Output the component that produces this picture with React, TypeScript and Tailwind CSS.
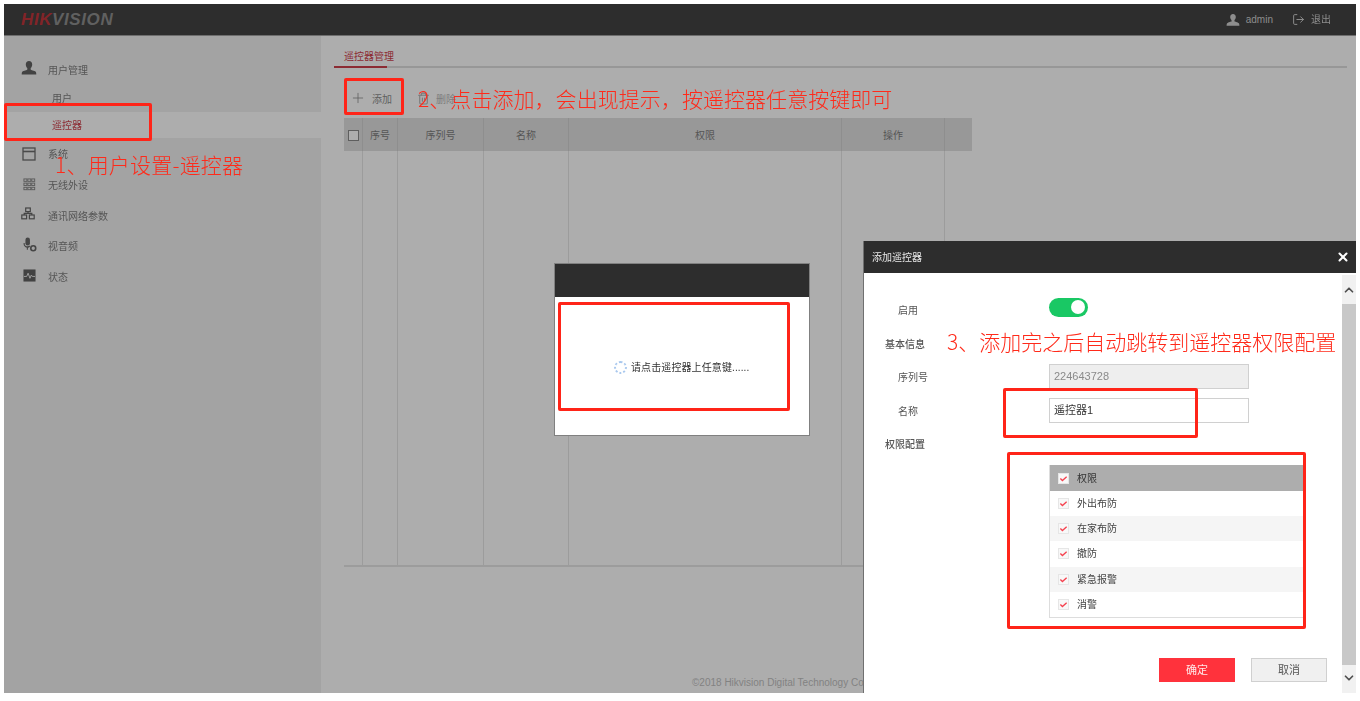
import { ChevronDown, ChevronUp, LogOut, Plus, Trash2, X } from "lucide-react";
import type { ReactNode } from "react";

const FONT = "font-['Liberation_Sans','Noto_Sans_CJK_SC',sans-serif]";

function UserIcon({ className }: { className: string }) {
  return (
    <svg viewBox="0 0 16 16" className={className} fill="currentColor">
      <path d="M8 1c2 0 3.200 1.500 3.200 3.500 0 1.500-.6 2.800-1.500 3.600v1.400c0 .5 3.800 1.100 5 2.300.5.500.6 2.200.6 2.700H.7c0-.5.100-2.200.6-2.700 1.200-1.200 5-1.800 5-2.300V8.100C5.400 7.300 4.800 6 4.800 4.500 4.800 2.500 6 1 8 1z" />
    </svg>
  );
}

function WindowIcon() {
  return (
    <svg viewBox="0 0 14 14" className="h-[14px] w-[14px] text-[#4a4a4a]" fill="none" stroke="currentColor" strokeWidth="1.300">
      <rect x="1" y="1" width="12" height="12" />
      <path d="M1 4.500h12" strokeWidth="1.600" />
    </svg>
  );
}

function GridIcon() {
  return (
    <svg viewBox="0 0 14 14" className="h-[13px] w-[13px] text-[#5a5a5a]" fill="none" stroke="currentColor" strokeWidth="1">
      {[1, 5.500, 10].map((y) =>
        [1, 5.200, 9.400].map((x) => <rect key={`${x}-${y}`} x={x} y={y} width="3.200" height="2.600" />),
      )}
    </svg>
  );
}

function NetworkIcon() {
  return (
    <svg viewBox="0 0 14 14" className="h-[14px] w-[14px] -translate-x-[1px] -translate-y-[1px] text-[#454545]" fill="none" stroke="currentColor" strokeWidth="1.200">
      <rect x="4.700" y="1" width="4.600" height="3.600" />
      <rect x=".8" y="8" width="4.800" height="3.800" />
      <rect x="8.400" y="8" width="4.800" height="3.800" />
      <path d="M7 4.600v1.700M3.200 8V6.300h7.600V8" />
    </svg>
  );
}

function MicIcon() {
  return (
    <svg viewBox="0 0 14 14" className="h-[15px] w-[15px] -translate-y-[1px] text-[#454545]" fill="currentColor">
      <rect x="3.200" y=".5" width="4.200" height="7.500" rx="2.100" />
      <path d="M1.500 5.500h1v1c0 2 3 3 4.500 1.500l.5 1c-1 .8-1.500 1-2 1.100V12H4.500v-2C2.800 9.500 1.500 8.200 1.500 6.500z" />
      <circle cx="10.500" cy="10.500" r="2.300" fill="none" stroke="currentColor" strokeWidth="1.500" />
    </svg>
  );
}

function StatusIcon() {
  return (
    <svg viewBox="0 0 14 14" className="h-[13px] w-[13px] -translate-y-[1px]">
      <rect x=".5" y=".5" width="13" height="13" fill="#424242" />
      <path d="M1 8h3l1.500-3.500L7.500 10 9 6.500l1 1.500h3" fill="none" stroke="#a3a3a3" strokeWidth="1" />
    </svg>
  );
}

function NavItem({ icon, label, height }: { icon: ReactNode; label: string; height: string }) {
  return (
    <div className={`flex items-center pl-[17px] pt-[2px] ${height}`}>
      <span className="flex w-[16px] -translate-y-[1px] justify-center">{icon}</span>
      <span className="ml-[11px] text-[10px] text-[#555555]">{label}</span>
    </div>
  );
}

function Sidebar() {
  return (
    <aside className="w-[317px] shrink-0 bg-[#a3a3a3] pt-[18px]">
      <NavItem icon={<UserIcon className="h-[16px] w-[16px] -translate-y-[2px] text-[#424242]" />} label="用户管理" height="h-[31px]" />
      <div className="flex h-[27px] items-center pl-[48px] text-[10px] text-[#555555]">用户</div>
      <div className="flex h-[26px] items-center bg-[#adadad] pl-[48px] text-[10px] text-[#8c2b33]">遥控器</div>
      <NavItem icon={<WindowIcon />} label="系统" height="h-[31px]" />
      <NavItem icon={<GridIcon />} label="无线外设" height="h-[31px]" />
      <NavItem icon={<NetworkIcon />} label="通讯网络参数" height="h-[30px]" />
      <NavItem icon={<MicIcon />} label="视音频" height="h-[31px]" />
      <NavItem icon={<StatusIcon />} label="状态" height="h-[31px]" />
    </aside>
  );
}

function HeadCell({ className, children }: { className: string; children?: ReactNode }) {
  return (
    <div className={`flex items-center justify-center border-r border-[#8e8e8e] pt-[2px] text-[10px] text-[#555555] ${className}`}>
      {children}
    </div>
  );
}

function BodyCell({ className }: { className: string }) {
  return <div className={`border-r border-[#9c9c9c] ${className}`} />;
}

function DeviceTable() {
  const widths = ["w-[19px]", "w-[35px]", "w-[86px]", "w-[85px]", "w-[273px]", "w-[103px]", "w-[27px]"];
  const heads = ["", "序号", "序列号", "名称", "权限", "操作", ""];
  return (
    <div className="ml-[10px] mt-[6px] w-[628px] border-b-2 border-[#9c9c9c]">
      <div className="flex h-[33px] bg-[#989898]">
        {heads.map((h, i) => (
          <HeadCell key={i} className={`${widths[i]} ${i === 6 ? "border-r-0" : ""}`}>
            {i === 0 ? <span className="h-[11px] w-[11px] border border-[#5e5e5e] bg-[#adadad]" /> : h}
          </HeadCell>
        ))}
      </div>
      <div className="flex h-[414px]">
        {widths.map((w, i) => (
          <BodyCell key={i} className={`${w} ${i === 6 ? "border-r-0" : ""}`} />
        ))}
      </div>
    </div>
  );
}

function Main() {
  return (
    <main className="relative flex-1 bg-[#adadad] pl-[13px] pr-[9px]">
      <div className="mt-[12px] h-[20px] border-b-2 border-[#979797]">
        <div className="h-[20px] w-[53px] whitespace-nowrap border-b-2 border-[#8c2b33] pl-[10px] text-[10px] leading-[17px] text-[#8c2b33]">
          遥控器管理
        </div>
      </div>
      <div className="mt-[14px] flex h-[30px] items-center pl-[16px] pt-[2px] text-[10px] text-[#5f5f5f]">
        <Plus className="h-[16px] w-[16px] text-[#5f5f5f]" strokeWidth={1.200} />
        <span className="ml-[6px] mt-[2px]">添加</span>
        <Trash2 className="ml-[25px] h-[13px] w-[13px] text-[#7a7a7a]" />
        <span className="ml-[6px] mt-[2px] text-[#7d7d7d]">删除</span>
      </div>
      <DeviceTable />
      <div className="absolute bottom-[3px] left-[371px] whitespace-nowrap text-[10px] text-[#828282]">
        ©2018 Hikvision Digital Technology Co., Ltd. All Rights Reserved.
      </div>
    </main>
  );
}

function FormRow({ label, bold, children }: { label: string; bold?: boolean; children?: ReactNode }) {
  return (
    <div className="flex h-[33.5px] items-center">
      <span className={`w-[185px] text-[10px] text-[#555555] ${bold ? "pl-[21px] font-medium" : "pl-[34px]"}`}>{label}</span>
      {children}
    </div>
  );
}

const perms = ["外出布防", "在家布防", "撤防", "紧急报警", "消警"];

function Check() {
  return (
    <span className="flex h-[11px] w-[11px] items-center justify-center border border-[#e6e6e6] bg-[#f8f8f8]">
      <svg viewBox="0 0 10 10" className="h-[9px] w-[9px]" fill="none" stroke="#f5424f" strokeWidth="1.500">
        <path d="M1.500 5l2.300 2.200L8.500 3" />
      </svg>
    </span>
  );
}

function AddDialog() {
  return (
    <div className="absolute left-[863px] top-[241px] h-[452px] w-[493px] border-l border-[#707070] bg-white">
      <div className="flex h-[32px] items-center justify-between bg-[#2d2d2d] pl-[8px] pr-[6px] text-[10px] text-[#e8e8e8]">
        <span>添加遥控器</span>
        <X className="h-[14px] w-[14px] text-white" strokeWidth={3.500} />
      </div>
      <div className="absolute right-0 top-[34px] flex h-[418px] w-[14px] flex-col items-center bg-[#f1f1f1]">
        <ChevronUp className="mt-[8px] h-[14px] w-[14px] shrink-0 text-[#505050]" strokeWidth={3} />
        <div className="mt-[7px] h-[361px] w-full bg-[#c8c8c8]" />
        <ChevronDown className="mt-[6px] h-[14px] w-[14px] shrink-0 text-[#505050]" strokeWidth={3} />
      </div>
      <div className="pt-[21px]">
        <FormRow label="启用">
          <span className="-mt-[7px] flex h-[19px] w-[39px] items-center justify-end rounded-full bg-[#19c864] pr-[3px]">
            <span className="h-[14px] w-[14px] rounded-full bg-white" />
          </span>
        </FormRow>
        <FormRow label="基本信息" bold />
        <FormRow label="序列号">
          <span className="-mt-[3px] flex h-[25px] w-[200px] items-center border border-[#d0d0d0] bg-[#eeeeee] pl-[4px] text-[11px] text-[#8a8a8a]">
            224643728
          </span>
        </FormRow>
        <FormRow label="名称">
          <span className="-mt-[2px] flex h-[25px] w-[200px] items-center border border-[#d0d0d0] bg-white pl-[4px] text-[11px] text-[#333333]">
            遥控器1
          </span>
        </FormRow>
        <FormRow label="权限配置" bold />
      </div>
      <div className="ml-[185px] mt-[3.5px] w-[254px] border-b border-l border-[#dddddd] text-[10px] text-[#444444]">
        <div className="flex h-[26px] items-center bg-[#adadad] pl-[8px] text-[#333333]">
          <Check />
          <span className="ml-[8px]">权限</span>
        </div>
        {perms.map((p, i) => (
          <div key={p} className={`flex h-[25.2px] items-center pl-[8px] ${i % 2 === 1 ? "bg-[#f5f5f5]" : "bg-white"}`}>
            <Check />
            <span className="ml-[8px]">{p}</span>
          </div>
        ))}
      </div>
      <div className="ml-[295px] mt-[40px] flex gap-[16px] text-[11px]">
        <button className="h-[24px] w-[76px] bg-[#ff323c] text-[#ffe9e9]">确定</button>
        <button className="h-[24px] w-[76px] border border-[#d0d0d0] bg-[#f0f0f0] text-[#555555]">取消</button>
      </div>
    </div>
  );
}

function WaitDialog() {
  return (
    <div className="absolute left-[554px] top-[263px] h-[173px] w-[256px] border border-[#808080] bg-white">
      <div className="h-[33px] bg-[#2d2d2d]" />
      <div className="ml-[59px] mt-[63px] flex items-center text-[10px] text-[#333333]">
        <span className="h-[13px] w-[13px] rounded-full border-2 border-dotted border-[#a9c8ee]" />
        <span className="ml-[4px] whitespace-nowrap tracking-[0.1px]">请点击遥控器上任意键......</span>
      </div>
    </div>
  );
}

function Notes() {
  const box = "absolute rounded-[2px] border-[3px] border-[#ff2418]";
  const note = "absolute whitespace-nowrap text-[21px] font-light leading-none text-[#ff2a1a] font-['Noto_Sans_CJK_SC',sans-serif]";
  return (
    <>
      <div className={`${box} left-[4px] top-[103px] h-[38px] w-[148px]`} />
      <div className={`${box} left-[344px] top-[78px] h-[37px] w-[60px]`} />
      <div className={`${box} left-[558px] top-[302px] h-[109px] w-[232px]`} />
      <div className={`${box} left-[1003px] top-[388px] h-[50px] w-[195px]`} />
      <div className={`${box} left-[1007px] top-[452px] h-[177px] w-[299px]`} />
      <span className={`${note} left-[55px] top-[154px] tracking-[0.2px]`}>1、用户设置-遥控器</span>
      <span className={`${note} left-[418px] top-[88px] tracking-[0.05px]`}>2、点击添加，会出现提示，按遥控器任意按键即可</span>
      <span className={`${note} left-[947px] top-[331px]`}>3、添加完之后自动跳转到遥控器权限配置</span>
    </>
  );
}

export default function App() {
  return (
    <div className={`relative h-[701px] w-[1360px] overflow-hidden bg-white p-[4px] pb-[8px] ${FONT}`}>
      <div className="flex h-full flex-col blur-[0.4px]">
        <header className="flex h-[32px] shrink-0 items-center justify-between border-b border-[#6e6e6e] bg-[#2d2d2d] pl-[17px] pr-[25px]">
          <span className="text-[17px] font-bold italic tracking-[0.6px]">
            <span className="text-[#822428]">HIK</span>
            <span className="text-[#606060]">VISION</span>
          </span>
          <div className="flex items-center text-[10px] text-[#8e8e8e]">
            <UserIcon className="h-[14px] w-[14px] text-[#8e8e8e]" />
            <span className="ml-[6px]">admin</span>
            <LogOut className="ml-[19px] h-[13px] w-[13px]" strokeWidth={1.800} />
            <span className="ml-[6px]">退出</span>
          </div>
        </header>
        <div className="flex min-h-0 flex-1">
          <Sidebar />
          <Main />
        </div>
      </div>
      <div className="absolute inset-0 blur-[0.4px]">
        <WaitDialog />
        <AddDialog />
      </div>
      <Notes />
    </div>
  );
}
